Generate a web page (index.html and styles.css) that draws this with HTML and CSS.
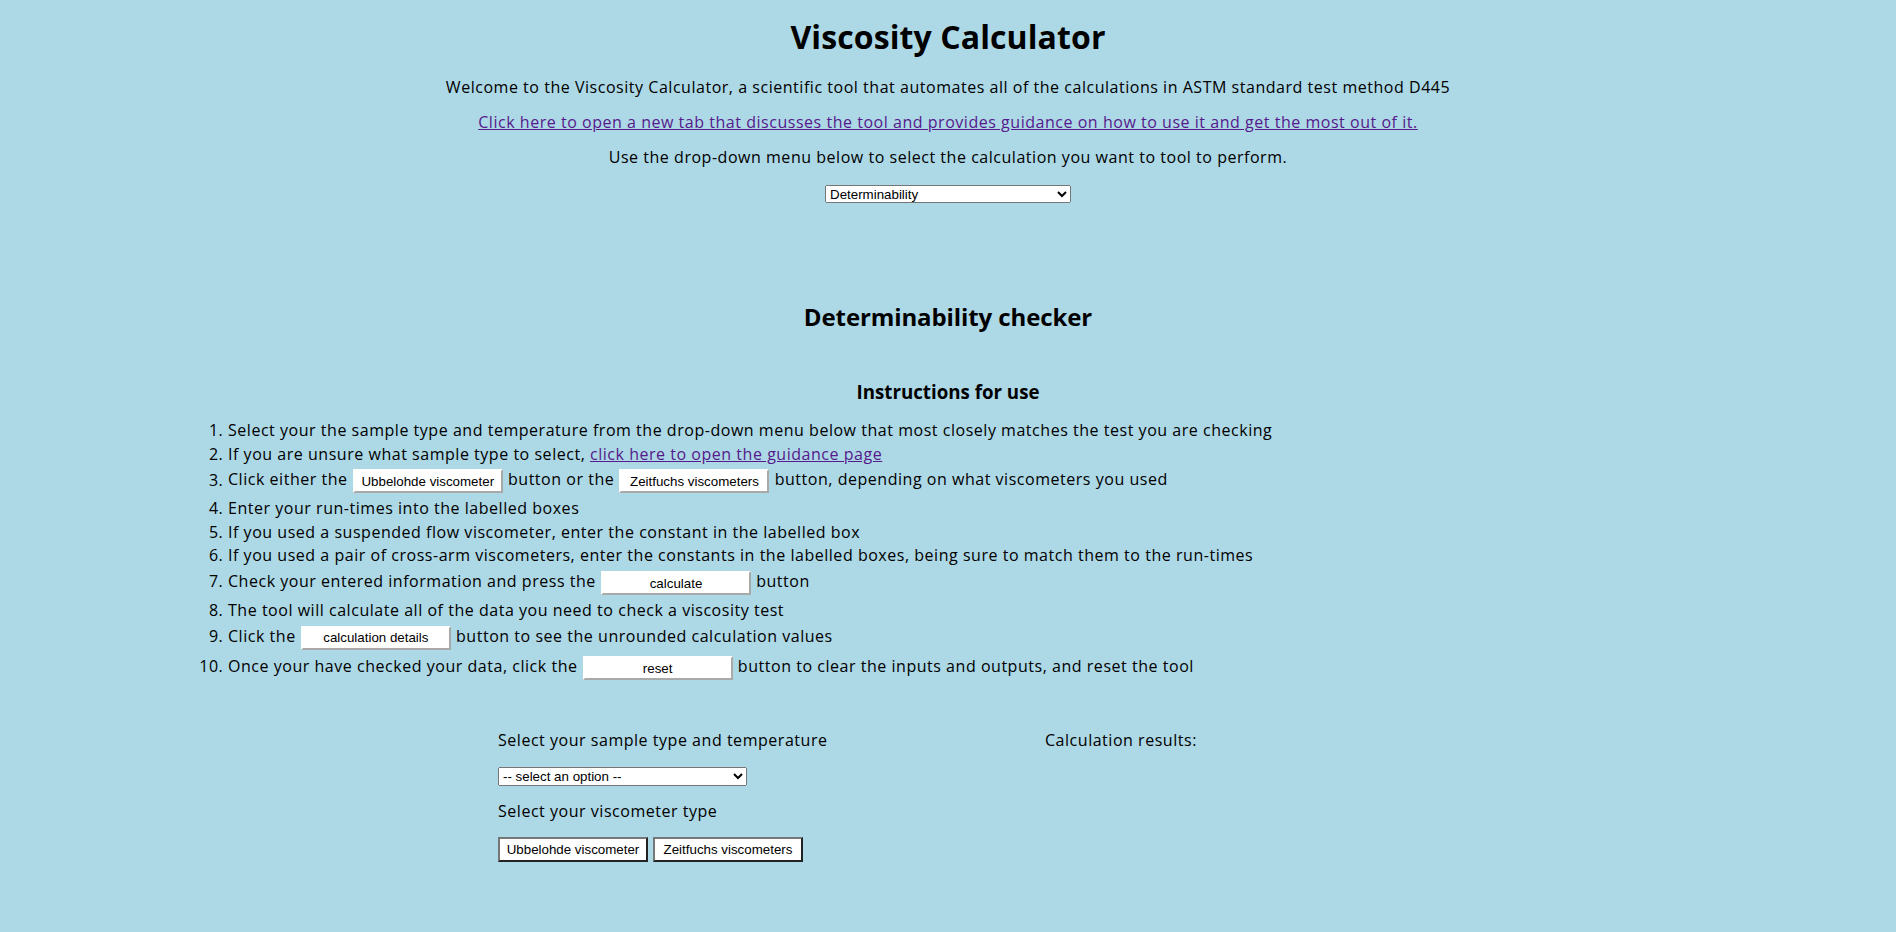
FILE: index.html
```html
<!DOCTYPE html>
<html lang="en">
<head>
<meta charset="utf-8">
<title>Viscosity Calculator</title>
<link rel="stylesheet" href="styles.css">
</head>
<body>
<header class="intro">
  <h1 class="title">Viscosity Calculator</h1>
  <p class="lead">Welcome to the Viscosity Calculator, a scientific tool that automates all of the calculations in ASTM standard test method D445</p>
  <p class="lead"><a class="link" href="#guidance">Click here to open a new tab that discusses the tool and provides guidance on how to use it and get the most out of it.</a></p>
  <p class="lead">Use the drop-down menu below to select the calculation you want to tool to perform.</p>
  <select class="calc-select">
    <option>Determinability</option>
  </select>
</header>

<section class="checker">
  <h2 class="checker-title">Determinability checker</h2>
  <h3 class="instr-title">Instructions for use</h3>
  <ol class="steps">
    <li>Select your the sample type and temperature from the drop-down menu below that most closely matches the test you are checking</li>
    <li>If you are unsure what sample type to select, <a class="link" href="#guidance">click here to open the guidance page</a></li>
    <li>Click either the <button class="inline-btn">Ubbelohde viscometer</button> button or the <button class="inline-btn">Zeitfuchs viscometers</button> button, depending on what viscometers you used</li>
    <li>Enter your run-times into the labelled boxes</li>
    <li>If you used a suspended flow viscometer, enter the constant in the labelled box</li>
    <li>If you used a pair of cross-arm viscometers, enter the constants in the labelled boxes, being sure to match them to the run-times</li>
    <li>Check your entered information and press the <button class="inline-btn">calculate</button> button</li>
    <li>The tool will calculate all of the data you need to check a viscosity test</li>
    <li>Click the <button class="inline-btn">calculation details</button> button to see the unrounded calculation values</li>
    <li>Once your have checked your data, click the <button class="inline-btn">reset</button> button to clear the inputs and outputs, and reset the tool</li>
  </ol>

  <div class="workspace">
    <div class="inputs">
      <p class="label">Select your sample type and temperature</p>
      <select class="sample-select">
        <option>-- select an option --</option>
      </select>
      <p class="label">Select your viscometer type</p>
      <div class="btn-row">
        <button class="type-btn">Ubbelohde viscometer</button>
        <button class="type-btn">Zeitfuchs viscometers</button>
      </div>
    </div>
    <div class="results">
      <p class="label">Calculation results:</p>
    </div>
  </div>
</section>
</body>
</html>
```

FILE: styles.css
```css
html, body {
  margin: 0;
  padding: 0;
}

body {
  background: #add8e6;
  color: #000;
  font-family: "Open Sans", "Liberation Sans", sans-serif;
  font-size: 16px;
  line-height: 19px;
  letter-spacing: 0.53px;
}

.intro {
  text-align: center;
  padding-top: 18px;
}

.title {
  margin: 0 0 22px;
  font-size: 32px;
  line-height: 38px;
  font-weight: 700;
  letter-spacing: 0.1px;
}

.lead {
  margin: 16px 0;
}

.title + .lead {
  margin-top: 0;
}

.link {
  color: #551a8b;
  text-decoration: underline;
}

.calc-select {
  display: block;
  margin: 17.5px auto 0;
  width: 246px;
  height: 18px;
  font-family: "Liberation Sans", Arial, sans-serif;
  font-size: 13.33px;
  letter-spacing: normal;
}

.checker {
  padding-top: 100px;
}

.checker-title {
  margin: 0;
  text-align: center;
  font-size: 24px;
  line-height: 28px;
  font-weight: 700;
  letter-spacing: -0.1px;
}

.instr-title {
  margin: 50px 0 0;
  text-align: center;
  font-size: 18.72px;
  line-height: 22px;
  font-weight: 700;
  letter-spacing: normal;
}

.steps {
  margin: 18.5px 0 0 188px;
  padding-left: 40px;
}

.steps li {
  margin-bottom: 4.7px;
}

.inline-btn {
  width: 150px;
  height: 24px;
  margin: 1px 0.5px;
  padding: 0 6px;
  vertical-align: middle;
  background: #fff;
  border: 2px solid;
  border-color: #fff #a9a9a9 #a9a9a9 #fff;
  font-family: "Liberation Sans", Arial, sans-serif;
  font-size: 13.33px;
  letter-spacing: normal;
  color: #000;
}

.workspace {
  display: grid;
  grid-template-columns: 547px 1fr;
  width: 900px;
  margin: 50px auto 0;
}

.label {
  margin: 0;
}

.sample-select {
  display: block;
  margin: 16.5px 0 16px;
  width: 249px;
  height: 19px;
  font-family: "Liberation Sans", Arial, sans-serif;
  font-size: 13.33px;
  letter-spacing: normal;
}

.btn-row {
  display: flex;
  gap: 5px;
  margin-top: 16px;
}

.type-btn {
  width: 150px;
  height: 25px;
  padding: 0 4px;
  background: #fff;
  border: 2px solid;
  border-color: #767676 #222 #222 #767676;
  font-family: "Liberation Sans", Arial, sans-serif;
  font-size: 13.33px;
  letter-spacing: normal;
  color: #000;
}
```
